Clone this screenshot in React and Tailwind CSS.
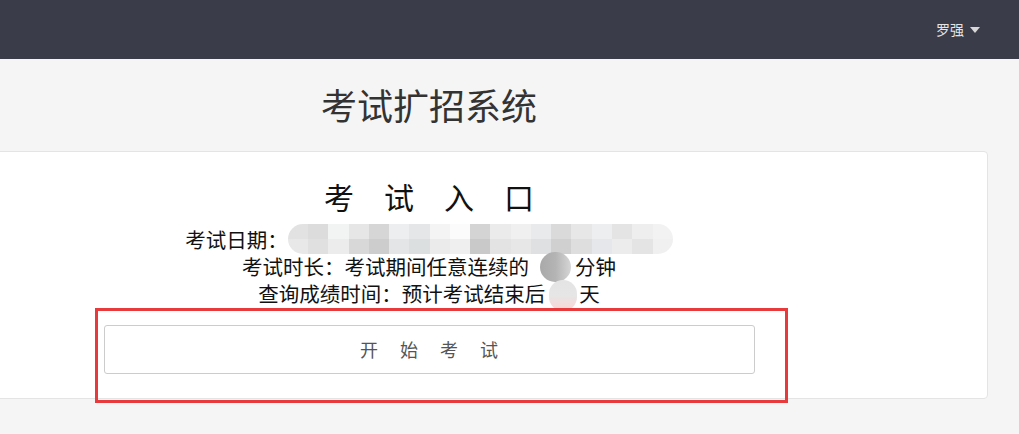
import React from "react";

const row1Top = ["#e2e2e2", "#dcdcdc", "#f2f3f3", "#e6e6e6", "#d6d6d6", "#eceeef", "#e4e6e7", "#f4f4f4", "#fbfbfb", "#d4d4d4", "#ecebeb", "#f1f0f0", "#e9eaec", "#dadada", "#e7e7e7", "#eceef0", "#e4e4e4", "#eeeeee", "#f2f2f2"];
const row1Bot = ["#e8e8e8", "#e0e0e0", "#ececec", "#d8d8d8", "#cdcdcd", "#e3e5e6", "#dcdfe0", "#ebebeb", "#efefef", "#c9c9c9", "#e4e3e3", "#e8e7e7", "#dfe0e2", "#d0d0d0", "#dedede", "#e5e7ea", "#ececec", "#e4e4e4", "#f0f0f0"];

// pixelated blur over the exam date
function BlurDate() {
  return (
    <span className="relative inline-block w-[385px] h-[1em] align-middle">
      <span className="absolute left-0 right-0 top-[-8px] h-[30px] flex flex-col rounded-full overflow-hidden blur-[0.5px]">
        <span className="flex h-1/2">
          {row1Top.map((c, i) => (
            <span key={i} className="flex-1" style={{ backgroundColor: c }} />
          ))}
        </span>
        <span className="flex h-1/2">
          {row1Bot.map((c, i) => (
            <span key={i} className="flex-1" style={{ backgroundColor: c }} />
          ))}
        </span>
      </span>
    </span>
  );
}

function App() {
  return (
    <div
      className="min-h-[434px] bg-[#f5f5f5] overflow-hidden"
      style={{ fontFamily: '"Noto Sans CJK SC", "Noto Sans", sans-serif' }}
    >
      <nav className="h-[59px] bg-[#3a3d49] flex items-center justify-end pr-[39px]">
        <span className="flex items-center gap-[6px] text-[14px] text-[#e4e4e4]">
          罗强
          <span className="w-0 h-0 border-l-[5px] border-r-[5px] border-t-[6px] border-l-transparent border-r-transparent border-t-[#d8d8d8]" />
        </span>
      </nav>

      <main className="ml-[-130px] w-[1118px]">
        <h1 className="mt-[25px] text-center text-[36px] leading-[40px] text-[#333]">
          考试扩招系统
        </h1>

        <section className="mt-[27px] h-[248px] bg-white border border-[#e4e4e4] rounded-[4px] flex flex-col items-center">
          <h2 className="mt-[26px] pl-[30px] text-[30px] leading-[36px] tracking-[30px] text-[#111]">
            考试入口
          </h2>

          <div className="mt-[12px] flex flex-col items-center text-[20.5px] leading-[27px] text-[#111]">
            <p className="whitespace-nowrap">
              考试日期：<BlurDate />
            </p>
            <p className="whitespace-nowrap">
              考试时长：考试期间任意连续的
              <span className="relative inline-block w-[46px] h-[1em] align-middle">
                <span className="absolute left-[11px] top-[-7px] w-[31px] h-[30px] rounded-full bg-gradient-to-r from-[#a9a9a9] via-[#b4b4b4] to-[#d6d6d6] blur-[0.5px]" />
              </span>
              分钟
            </p>
            <p className="whitespace-nowrap">
              查询成绩时间：预计考试结束后
              <span className="relative inline-block w-[34px] h-[1em] align-middle">
                <span className="absolute left-[4px] top-[-6px] w-[28px] h-[31px] rounded-full bg-gradient-to-b from-[#e4e4e4] via-[#e6e6e6] to-[#fcd4d4] blur-[0.5px]" />
              </span>
              天
            </p>
          </div>

          <div className="relative mt-[18px]">
            <button className="w-[651px] h-[49px] bg-white border border-[#cccccc] rounded-[3px] pl-[22px] text-[18px] tracking-[22px] text-[#555]">
              开始考试
            </button>
            <div className="absolute left-[-9px] right-[-33px] top-[-17px] bottom-[-29px] border-[3px] border-[#e8393c]" />
          </div>
        </section>
      </main>
    </div>
  );
}

export default App;
